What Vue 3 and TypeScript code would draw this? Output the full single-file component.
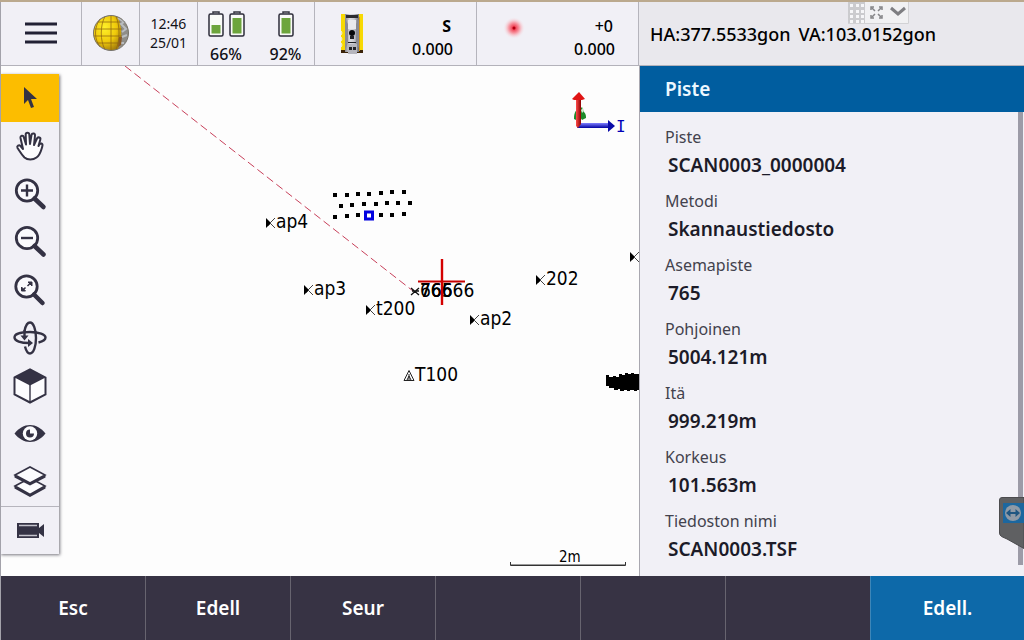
<script setup lang="ts">
interface MapPoint {
  name: string
  x: number
  y: number
}

interface Field {
  label: string
  value: string
}

const points: MapPoint[] = [
  { name: 'ap4', x: 266, y: 157 },
  { name: 'ap3', x: 304, y: 224 },
  { name: 't200', x: 366, y: 244 },
  { name: 'ap2', x: 470, y: 254 },
  { name: '202', x: 536, y: 214 },
  { name: '', x: 630, y: 191 },
]

const stationLabels: string[] = ['765', '666', '76666']

const scanPoints: [number, number][] = [
  [335, 129], [347, 129], [358, 128], [369, 128], [381, 127], [392, 126], [404, 126],
  [341, 140], [352, 139], [364, 138], [376, 138], [387, 137], [398, 137], [410, 137],
  [335, 151], [347, 150], [358, 149], [381, 149], [392, 149], [404, 148],
]

const fields: Field[] = [
  { label: 'Piste', value: 'SCAN0003_0000004' },
  { label: 'Metodi', value: 'Skannaustiedosto' },
  { label: 'Asemapiste', value: '765' },
  { label: 'Pohjoinen', value: '5004.121m' },
  { label: 'Itä', value: '999.219m' },
  { label: 'Korkeus', value: '101.563m' },
  { label: 'Tiedoston nimi', value: 'SCAN0003.TSF' },
]

const softkeys: string[] = ['Esc', 'Edell', 'Seur', '', '', '']
</script>

<template>
  <div class="window">
    <header class="status">
      <div class="status-left">
        <button class="cell menu" aria-label="Menu">
          <svg width="32" height="22" viewBox="0 0 32 22">
            <path d="M0 2h32M0 11h32M0 20h32" stroke="#222134" stroke-width="3" />
          </svg>
        </button>
        <button class="cell globe" aria-label="Connection">
          <svg width="36" height="36" viewBox="0 0 36 36">
            <defs>
              <radialGradient id="globeFill" cx=".4" cy=".35" r=".7">
                <stop offset="0" stop-color="#fff12a" />
                <stop offset=".6" stop-color="#efc90a" />
                <stop offset="1" stop-color="#a9820c" />
              </radialGradient>
            </defs>
            <circle cx="18" cy="18" r="17.5" fill="#8f8d88" />
            <path d="M24 1.5C17-1 1 3 .5 18S17 37 25 34C30 24 29 9 24 1.5Z" fill="url(#globeFill)" />
            <path d="M25 3l6 4-3 2 5 5-4 3M29 22l5-2M28 28l3 0" stroke="#b9bcc0" stroke-width="2" fill="none" />
            <path d="M26 22l3 0-1 8-3 2z" fill="#8a5a2a" />
            <g fill="none" stroke="#8d6410" stroke-opacity=".75" stroke-width="1">
              <path d="M5 7h22M1.5 14h27.5M1 21h28M4 28h24" />
              <path d="M18 1v34M12 1.5C7 10 7 26 12 34.5M7 4C1 12 1 24 7 32M23 1.5C27 10 27 26 23 34.5" />
            </g>
            <circle cx="18" cy="18" r="17.5" fill="none" stroke="#77736a" stroke-width="1" />
          </svg>
        </button>
        <div class="cell clock">
          <span>12:46</span>
          <span>25/01</span>
        </div>
        <div class="cell batteries">
          <div class="battery">
            <div class="battery-icons">
              <svg width="16" height="26" viewBox="0 0 16 26">
                <path d="M5 2.5V1h6v1.5" fill="none" stroke="#35343f" stroke-width="1.5" />
                <rect x="1" y="3" width="14" height="22" rx="1.5" fill="#fafbf8" stroke="#2d2c3a" stroke-width="1.5" />
                <rect x="3.5" y="14" width="9" height="8.5" fill="#6da53c" />
              </svg>
              <svg width="16" height="26" viewBox="0 0 16 26">
                <path d="M5 2.5V1h6v1.5" fill="none" stroke="#35343f" stroke-width="1.5" />
                <rect x="1" y="3" width="14" height="22" rx="1.5" fill="#fafbf8" stroke="#2d2c3a" stroke-width="1.5" />
                <rect x="3.5" y="7" width="9" height="15.5" fill="#6da53c" />
              </svg>
            </div>
            <span>66%</span>
          </div>
          <div class="battery">
            <div class="battery-icons">
              <svg width="16" height="26" viewBox="0 0 16 26">
                <path d="M5 2.5V1h6v1.5" fill="none" stroke="#35343f" stroke-width="1.5" />
                <rect x="1" y="3" width="14" height="22" rx="1.5" fill="#fafbf8" stroke="#2d2c3a" stroke-width="1.5" />
                <rect x="3.5" y="7" width="9" height="15.5" fill="#6da53c" />
              </svg>
            </div>
            <span>92%</span>
          </div>
        </div>
        <button class="cell reading">
          <svg width="24" height="42" viewBox="0 0 24 42">
            <defs>
              <linearGradient id="body" x1="0" x2="1">
                <stop offset="0" stop-color="#85858d" />
                <stop offset=".35" stop-color="#dcdce2" />
                <stop offset=".65" stop-color="#c8c8d0" />
                <stop offset="1" stop-color="#6c6c74" />
              </linearGradient>
            </defs>
            <path d="M1 1h5v38H1zM18 1h5v38h-5z" fill="#f7d904" />
            <path d="M1 37h22v3H1z" fill="#3a2208" />
            <path d="M18 4h2v34h-2z" fill="#d99b08" />
            <path d="M5 1h14v38H5z" fill="url(#body)" />
            <path d="M6 2h12v3H6z" fill="#2b2b30" />
            <path d="M5 6l3 5v18l-2 6H5zM19 6l-3 5v18l3 6z" fill="#8a8a93" />
            <path d="M8 7h8v9H8z" fill="#e9e9ee" />
            <circle cx="12" cy="20" r="3" fill="#08080c" />
            <path d="M10 23h4v3h-4zM8 29h8v1H8z" fill="#202026" />
            <path d="M8 31h9v10H8z" fill="#b6b6be" />
            <path d="M9 34h3v3H9zM13 34h3v3h-3z" fill="#24242a" />
            <path d="M1 18l1 2-1 2M1 24l1 2-1 2M1 30l1 2-1 2" stroke="#f2f1f6" fill="none" />
          </svg>
          <span class="figures"><b>S</b><span>0.000</span></span>
        </button>
        <button class="cell reading target">
          <svg width="22" height="22" viewBox="0 0 22 22">
            <defs>
              <radialGradient id="glow">
                <stop offset="0" stop-color="#e00016" />
                <stop offset=".15" stop-color="#f04456" />
                <stop offset=".5" stop-color="#f7a0aa" />
                <stop offset="1" stop-color="#f4eef3" stop-opacity="0" />
              </radialGradient>
            </defs>
            <circle cx="11" cy="11" r="11" fill="url(#glow)" />
            <circle cx="11" cy="11" r="1.5" fill="#b00010" />
          </svg>
          <span class="figures"><span>+0</span><span>0.000</span></span>
        </button>
      </div>
      <div class="angles">
        <span>HA:377.5533gon</span>
        <span>VA:103.0152gon</span>
        <div class="remote-bar">
          <svg width="61" height="22" viewBox="0 0 61 22">
            <rect width="61" height="22" fill="#f1f1f3" />
            <rect width="17" height="22" fill="#cbcbce" />
            <path
              d="M2 2h3v3H2zM8 2h3v3H8zM13 2h3v3h-3zM2 8h3v3H2zM8 8h3v3H8zM13 8h3v3h-3zM2 13h3v3H2zM8 13h3v3H8zM13 13h3v3h-3zM2 18h3v3H2zM8 18h3v3H8zM13 18h3v3h-3z"
              fill="#f6f6f8"
            />
            <g fill="none" stroke="#858588" stroke-width="1.5">
              <path d="M23 8V5h3M31 5h3v3M34 13v3h-3M26 16h-3v-3" />
              <path d="M23.5 5.5L27 9M33.5 5.5L30 9M33.5 15.5L30 12M23.5 15.5L27 12" />
            </g>
            <path d="M43 6l7 6 7-6" fill="none" stroke="#7e7e82" stroke-width="3" />
            <path d="M0 21.5h60.5V0" fill="none" stroke="#d2d2d5" />
          </svg>
        </div>
      </div>
    </header>

    <main class="content">
      <section class="map">
        <svg class="canvas" width="100%" height="100%">
          <path d="M125 0L413 225" stroke="#c8405a" stroke-width="1" stroke-dasharray="8 4" fill="none" />
          <g v-for="(p, i) in points" :key="i">
            <path :d="`M${p.x} ${p.y - 5}v10l5-5z`" fill="#000" />
            <path :d="`M${p.x + 9} ${p.y - 5}l-5 5l5 5M${p.x + 2} ${p.y + 3}l3-3`" fill="none" stroke="#444" />
            <text :x="p.x + 10" :y="p.y + 5">{{ p.name }}</text>
          </g>
          <rect v-for="([x, y], i) in scanPoints" :key="`s${i}`" :x="x - 2" :y="y - 2" width="4" height="4" />
          <rect x="365.5" y="146" width="7" height="7" fill="#fff" stroke="#0000e0" stroke-width="3" />
          <path d="M411 222l8 7M419 222l-8 7M412 225h2M416 225h3" stroke="#111" stroke-width="1.3" />
          <text v-for="name in stationLabels" :key="name" x="420" y="231">{{ name }}</text>
          <path d="M418 215.5h47" stroke="#c80000" stroke-width="2" />
          <path d="M442 193v46" stroke="#d40000" stroke-width="2.4" />
          <path d="M409 304.5l5 10h-10zM409 308v6M407 314l2-4 2 4" fill="none" stroke="#222" />
          <text x="415" y="315">T100</text>
          <path
            d="M606 309h3v2h4v-1h3v1h3v-3h3v1h3v-2h3v1h3v-1h3v1h6v16h-3v1h-3v-1h-4v1h-3v-1h-3v1h-4v-2h-2v1h-4v-2h-5v-2h-3z"
          />
          <defs>
            <linearGradient id="axisUp" x1="0" x2="1">
              <stop offset="0" stop-color="#ff4a4a" />
              <stop offset="1" stop-color="#8c0000" />
            </linearGradient>
            <linearGradient id="axisSide" x1="0" x2="0" y1="0" y2="1">
              <stop offset="0" stop-color="#8080ff" />
              <stop offset="1" stop-color="#0000a0" />
            </linearGradient>
          </defs>
          <path d="M574 53c0-7 2-10 7-11l1-1 2 5c2 2 2 4 2 6l-4 2-2-3-2 4z" fill="#1d8a2a" />
          <path d="M581 44l2-2 1 3-2 2z" fill="#cfeccf" />
          <path d="M579 57h31v5h-33z" fill="url(#axisSide)" />
          <path d="M608 54l7 6-7 6z" fill="#0a0aa8" />
          <path d="M576 32h5v26l-3 4-2-2z" fill="url(#axisUp)" />
          <path d="M572 33l7-7 6 7-3 1h-8z" fill="#e01414" />
          <text class="axis" x="616" y="66">I</text>
          <path d="M510.5 496v3.5h115V496" fill="none" stroke="#333" stroke-width="1" />
          <path d="M511 498.5h114" stroke="#9a9a9a" />
          <text class="scale" x="559" y="496">2m</text>
        </svg>

        <nav class="tools">
          <button class="active" aria-label="Select">
            <svg viewBox="0 0 36 36"><path d="M12 7v17l4-4 3 8 3-1-3-8 6 0z" fill="#343244" /></svg>
          </button>
          <button aria-label="Pan">
            <svg viewBox="0 0 36 36">
              <path
                d="M12.5 29.5C9 26 7.5 23 5.5 20c-1-2 1.5-3.5 3-2l2.5 3L8.500 10c-.5-2.500 2.800-3 3.300-.8L14 16.500 13.700 6.500c0-2.500 3.500-2.500 3.600 0L18 16l1.500-9c.5-2.300 3.700-1.800 3.500.6L22 17l3-6.500c1-2.200 4-.8 3.300 1.200L26.500 18c1-2 1.500-3 3-2.500 1.800.7 1 2.500.5 4-1.200 4-2 7.500-5.500 10-3.500 2.700-9 2.700-12 0Z"
                fill="#fcfcfe" stroke="#343244" stroke-width="2" stroke-linejoin="round"
              />
            </svg>
          </button>
          <button aria-label="Zoom in">
            <svg viewBox="0 0 36 36">
              <circle cx="15" cy="14.5" r="10.7" fill="#fafafd" stroke="#343244" stroke-width="2.8" />
              <path d="M9 14.5h12M15 8.5v12" stroke="#343244" stroke-width="2.4" />
              <path d="M22.5 22.5l9 8.5" stroke="#343244" stroke-width="4.5" stroke-linecap="round" />
            </svg>
          </button>
          <button aria-label="Zoom out">
            <svg viewBox="0 0 36 36">
              <circle cx="15" cy="14" r="10.7" fill="#fafafd" stroke="#343244" stroke-width="2.8" />
              <path d="M9 14h12" stroke="#343244" stroke-width="2.4" />
              <path d="M22.5 22l9 8.500" stroke="#343244" stroke-width="4.5" stroke-linecap="round" />
            </svg>
          </button>
          <button aria-label="Zoom extents">
            <svg viewBox="0 0 36 36">
              <circle cx="14.5" cy="14.5" r="10.7" fill="#fafafd" stroke="#343244" stroke-width="2.8" />
              <path d="M16 10h4v4zM13.5 19h-4v-4z" fill="#343244" stroke="#343244" />
              <path d="M15.500 14l3-3M13.500 15.500l-3 3" stroke="#343244" stroke-width="1.5" />
              <path d="M22 22.5l8.500 8.500" stroke="#343244" stroke-width="4.5" stroke-linecap="round" />
            </svg>
          </button>
          <button aria-label="Orbit">
            <svg viewBox="0 0 36 36">
              <g fill="none" stroke="#343244" stroke-width="2.4">
                <path d="M12.5 11c1-5 3-8.500 5.500-8.500 3.500 0 6 7 6 15.500s-2.500 15.500-6 15.500c-2.500 0-4-3-5-7" />
                <path d="M17 23C9 23 2.500 21 2.500 17.500S9 12 18 12s15.500 2.500 15.500 5.500c0 2.500-3 4-7 5" />
                <path d="M12.500 10v7" />
              </g>
              <path d="M8.500 15.500h8l-4 5zM16 19l5 4-5 4z" fill="#343244" />
            </svg>
          </button>
          <button aria-label="3D views">
            <svg viewBox="0 0 36 36">
              <path d="M2.5 9.5L18 1.5l15.500 8v17L18 34.500 2.500 26.500z" fill="#fcfcfe" stroke="#343244" stroke-width="2" />
              <path d="M2.5 9.5L18 1.5l15.500 8L18 17.500z" fill="#343244" />
              <path d="M18 17v17" stroke="#343244" stroke-width="1.4" />
            </svg>
          </button>
          <button aria-label="Visibility">
            <svg viewBox="0 0 36 36">
              <path d="M2.5 17.5C7 12 12 9 18 9S29 12 33.500 17.500C29 23 24 26 18 26S7 23 2.500 17.500Z" fill="#343244" />
              <circle cx="18" cy="17.5" r="7.2" fill="#fcfcfe" />
              <path d="M18 13.5a4 4 0 1 0 4 4h-4z" fill="#343244" />
            </svg>
          </button>
          <button aria-label="Layers">
            <svg viewBox="0 0 36 36">
              <path d="M3 22l15-8 15 8-15 8.500z" fill="#fcfcfe" stroke="#343244" stroke-width="1.6" />
              <path d="M2.5 22l15.500 8.500L33.500 22v2.500l-15.500 8.500L2.500 24.500z" fill="#343244" />
              <path d="M3 11l15-8L33 11l-15 8z" fill="#fcfcfe" stroke="#343244" stroke-width="1.6" />
              <path d="M2.5 11l15.500 8L33.500 11v2.500l-15.500 8L2.500 13.500z" fill="#343244" />
            </svg>
          </button>
          <button class="video" aria-label="Video">
            <svg viewBox="0 0 36 36">
              <path d="M5 10h22v5l5-4v13l-5-4v5H5z" fill="#343244" />
              <path d="M7 12.5h18M7 22.5h18" stroke="#c4c3cc" stroke-width="1.5" />
            </svg>
          </button>
        </nav>
      </section>

      <aside class="panel">
        <h1>Piste</h1>
        <div class="details">
          <dl>
            <div v-for="f in fields" :key="f.label" class="field">
              <dt>{{ f.label }}</dt>
              <dd>{{ f.value }}</dd>
            </div>
          </dl>
          <div class="scrollbar"></div>
        </div>
        <button class="remote-tab" aria-label="Remote session">
          <svg width="25" height="52" viewBox="0 0 25 52">
            <path d="M25 .5H3Q.5.5.5 3v33q0 2 2 3.500L8 42l17 9.500z" fill="#5f6062" stroke="#4b4b4e" />
            <rect x="4" y="6" width="21" height="20" fill="#1c679f" />
            <circle cx="14" cy="16" r="8" fill="#8f9aa6" />
            <path d="M7 16l4.500-4v3h5v-3l4.500 4-4.500 4v-3h-5v3z" fill="#1f5681" />
          </svg>
        </button>
      </aside>
    </main>

    <footer class="softkeys">
      <button v-for="(key, i) in softkeys" :key="i">{{ key }}</button>
      <button class="primary">Edell.</button>
    </footer>
  </div>
</template>

<style>
html,
body,
#app {
  height: 100%;
  margin: 0;
}
</style>

<style scoped>
.window {
  position: relative;
  box-sizing: border-box;
  display: flex;
  flex-direction: column;
  min-height: 100%;
  border-top: 2px solid #bba98e;
  background: #f1f0f6;
  color: #111118;
  font-family: 'Noto Sans', 'Open Sans', sans-serif;
  overflow: hidden;
}

.window::after {
  content: '';
  position: absolute;
  inset: 0 auto 0 0;
  width: 1px;
  background: #a3a2aa;
}

button {
  margin: 0;
  padding: 0;
  border: 0;
  background: none;
  color: inherit;
  font: inherit;
}

svg {
  display: block;
}

.status,
.content {
  display: grid;
  grid-template-columns: 639fr 385fr;
}

.status {
  height: 63px;
  border-bottom: 1px solid #b3b2ba;
}

.status-left {
  display: grid;
  grid-template-columns: 82fr 58fr 58fr 117fr 162fr 162fr;
}

.cell {
  display: flex;
  align-items: center;
  justify-content: center;
  border-right: 1px solid #b5b4bc;
}

.menu,
.globe {
  padding-bottom: 1px;
}

.clock {
  flex-direction: column;
  font-size: 14px;
  line-height: 19px;
  padding-bottom: 1px;
}

.batteries {
  gap: 25px;
  padding-right: 3px;
  font-size: 16px;
  font-weight: 500;
}

.battery {
  display: flex;
  flex-direction: column;
  align-items: center;
  gap: 7px;
  padding-top: 7px;
  line-height: 20px;
}

.battery-icons {
  display: flex;
  gap: 5px;
}

.cell.reading {
  justify-content: space-between;
  padding: 0 23px 0 25px;
  color: #000;
  font-size: 16px;
  font-weight: 500;
}

.cell.reading.target {
  padding: 0 23px 0 26px;
}

.target svg {
  margin-bottom: 12px;
}

.figures {
  display: flex;
  flex-direction: column;
  align-items: flex-end;
  line-height: 23px;
  padding-top: 8px;
}

.figures > :first-child {
  padding-right: 2px;
}

.angles {
  position: relative;
  display: flex;
  align-items: center;
  gap: 8px;
  padding: 0 10px;
  border-left: 1px solid #e9e8ed;
  background: #e9e8ed;
  color: #000;
  font-size: 18px;
  font-weight: 500;
}

.remote-bar {
  position: absolute;
  top: 0;
  right: 115px;
}

.content {
  flex: 1;
}

.map {
  position: relative;
  overflow: hidden;
  background: #fdfdfd;
}

.canvas {
  position: absolute;
  inset: 0;
  font-family: 'DejaVu Sans Condensed', 'DejaVu Sans', sans-serif;
  font-size: 19px;
}

.axis {
  fill: #0000b8;
  font-family: 'DejaVu Sans Mono', monospace;
  font-size: 16px;
}

.scale {
  font-size: 15px;
}

.tools {
  position: absolute;
  top: 8px;
  left: 0;
  display: flex;
  flex-direction: column;
  width: 59px;
  background: #f1f0f6;
  box-shadow: 1px 1px 3px #77767e;
}

.tools button {
  display: flex;
  align-items: center;
  justify-content: center;
  height: 48px;
}

.tools svg {
  width: 36px;
  height: 36px;
}

.tools .active {
  background: #fcbd00;
}

.tools .video {
  border-top: 1px solid #b6b5bd;
}

.panel {
  position: relative;
  display: flex;
  flex-direction: column;
  border-left: 1px solid #a9a8b0;
  background: #f1f0f6;
}

h1 {
  margin: 0;
  padding: 1px 25px 0;
  background: #005d9f;
  color: #eef8ff;
  font-size: 19px;
  font-weight: 600;
  line-height: 45px;
}

.details {
  display: flex;
  flex: 1;
  justify-content: space-between;
  padding-right: 1px;
}

dl {
  display: flex;
  flex-direction: column;
  gap: 8px;
  margin: 0;
  padding: 13px 25px 10px;
}

dt {
  color: #43424d;
  font-size: 16px;
  line-height: 24px;
}

dd {
  margin: 0;
  padding-left: 3px;
  color: #1c1b28;
  font-size: 19px;
  font-weight: 600;
  line-height: 32px;
}

.scrollbar {
  width: 5px;
  margin-bottom: 11px;
  background: #9c9ba7;
}

.remote-tab {
  position: absolute;
  right: 0;
  bottom: 27px;
}

.softkeys {
  display: grid;
  grid-template-columns: repeat(6, 145fr) 154fr;
  height: 64px;
  background: #373344;
  color: #fff;
  font-size: 19px;
  font-weight: 600;
}

.softkeys button {
  border-left: 1px solid #67646f;
}

.softkeys .primary {
  border-left-color: #3d86b8;
  background: #0d69a9;
}
</style>
